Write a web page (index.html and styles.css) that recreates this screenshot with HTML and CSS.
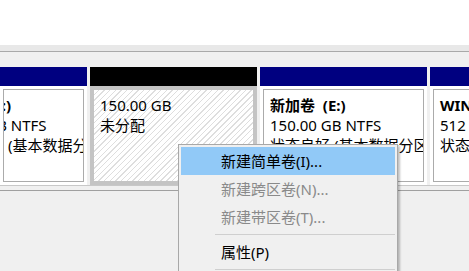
FILE: index.html
```html
<!DOCTYPE html>
<html lang="zh-CN">
<head>
<meta charset="utf-8">
<title>磁盘管理</title>
<link rel="stylesheet" href="styles.css">
</head>
<body>
<div class="window">
  <div class="top"></div>
  <div class="band"></div>
  <div class="map">
    <div class="disk">
      <div class="part p-left">
        <div class="hdr navy"></div>
        <div class="body">
          <div class="inner">
            <div class="txt shift">
              <div class="label">软件&nbsp;&nbsp; (D:)</div>
              <div>99.45 GB NTFS</div>
              <div>状态良好 (基本数据分区)</div>
            </div>
          </div>
        </div>
      </div>
      <div class="part p-free">
        <div class="hdr black"></div>
        <div class="body sel">
          <div class="inner plain">
            <div class="txt">
              <div>150.00 GB</div>
              <div>未分配</div>
            </div>
          </div>
        </div>
      </div>
      <div class="part p-e">
        <div class="hdr navy"></div>
        <div class="body">
          <div class="inner">
            <div class="txt">
              <div class="label">新加卷&nbsp; (E:)</div>
              <div>150.00 GB NTFS</div>
              <div>状态良好 (基本数据分区)</div>
            </div>
          </div>
        </div>
      </div>
      <div class="part p-win">
        <div class="hdr navy"></div>
        <div class="body">
          <div class="inner">
            <div class="txt">
              <div class="label">WINRE_DRV</div>
              <div>512 MB NTFS</div>
              <div>状态良好 (OEM 分区)</div>
            </div>
          </div>
        </div>
      </div>
    </div>
    <div class="rule"></div>
  </div>

  <div class="menu">
    <div class="item active">新建简单卷(I)...</div>
    <div class="item disabled">新建跨区卷(N)...</div>
    <div class="item disabled">新建带区卷(T)...</div>
    <div class="sep"></div>
    <div class="item">属性(P)</div>
    <div class="sep"></div>
  </div>
</div>
</body>
</html>
```

FILE: styles.css
```css
html, body {
  margin: 0;
  padding: 0;
}
body {
  width: 469px;
  height: 271px;
  overflow: hidden;
  background: #f0f0f0;
  font-family: "Noto Sans", "Noto Sans CJK SC", sans-serif;
  font-size: 15px;
  color: #000;
}
.window {
  position: relative;
  width: 469px;
  height: 271px;
  overflow: hidden;
}
.top {
  height: 45px;
  background: #fff;
}
.band {
  height: 6px;
  background: #e8e8e8;
  border-bottom: 1px solid #a9a9a9;
}
.map {
  padding-top: 15px;
}
.disk {
  display: flex;
  gap: 3px;
  height: 119px;
  border-bottom: 1px solid #c8c8c8;
  box-sizing: border-box;
}
.part {
  display: flex;
  flex-direction: column;
  flex: none;
}
.p-left { width: 87px; }
.p-free { width: 167px; }
.p-e { width: 167px; }
.p-win { width: 100px; }
.hdr {
  height: 19px;
  flex: none;
}
.navy { background: #000080; }
.black { background: #000; }
.body {
  flex: 1;
  background: #fff;
  padding: 3px;
  min-height: 0;
}
.inner {
  height: 100%;
  box-sizing: border-box;
  border: 1px solid #ababab;
  padding: 5px 6px;
  overflow: hidden;
}
.body.sel {
  padding: 0;
  border: 4px solid #c4c4c4;
  background: repeating-linear-gradient(135deg, #fff 0 3px, #dedede 3px 4px);
}
.inner.plain {
  border: none;
}
.txt {
  line-height: 20px;
  white-space: nowrap;
}
.txt.shift {
  margin-left: -66px;
}
.label {
  font-weight: bold;
}
.rule {
  margin-top: 4px;
  border-top: 1px solid #a0a0a0;
}
.menu {
  position: absolute;
  left: 178px;
  top: 144px;
  width: 220px;
  height: 140px;
  box-sizing: border-box;
  background: #f0f0f0;
  border: 1px solid #a8a8a8;
  padding: 2px;
  box-shadow: 2px 2px 2px rgba(0, 0, 0, 0.25);
}
.item {
  height: 28px;
  line-height: 28px;
  padding-left: 40px;
  white-space: nowrap;
  color: #000;
}
.item.active {
  background: #91c9f7;
}
.item.disabled {
  color: #8a8a8a;
}
.sep {
  margin: 3px 0 3px 34px;
  border-top: 1px solid #cfcfcf;
}
```
